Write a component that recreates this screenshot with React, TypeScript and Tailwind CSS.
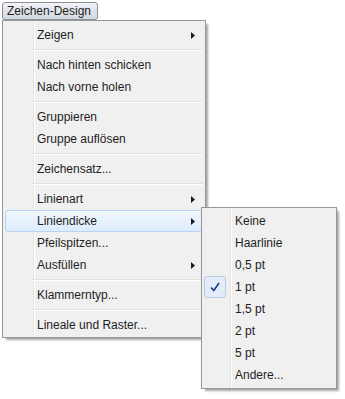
const mainItems: Array<{ label: string; sub?: boolean; active?: boolean } | "sep"> = [
  { label: "Zeigen", sub: true },
  "sep",
  { label: "Nach hinten schicken" },
  { label: "Nach vorne holen" },
  "sep",
  { label: "Gruppieren" },
  { label: "Gruppe auflösen" },
  "sep",
  { label: "Zeichensatz..." },
  "sep",
  { label: "Linienart", sub: true },
  { label: "Liniendicke", sub: true, active: true },
  { label: "Pfeilspitzen..." },
  { label: "Ausfüllen", sub: true },
  "sep",
  { label: "Klammerntyp..." },
  "sep",
  { label: "Lineale und Raster..." },
];

const subItems = ["Keine", "Haarlinie", "0,5 pt", "1 pt", "1,5 pt", "2 pt", "5 pt", "Andere..."];

const Arrow = () => (
  <svg width="4" height="7" viewBox="0 0 4 7" className="shrink-0">
    <path d="M0 0 L4 3.5 L0 7 Z" fill="#1a1a1a" />
  </svg>
);

const App = () => {
  return (
    <div className="relative h-[399px] w-[345px] bg-white font-['Liberation_Sans',sans-serif] text-[12px] text-[#1e1e1e]">
      <div className="pl-[2px] pt-[2px]">
        <div className="flex h-[18px] w-[96px] items-center rounded-[3px] border border-[#8e8f8f] bg-[linear-gradient(to_bottom,#f2f4f7,#dfe3ea_50%,#d3d9e2)] pl-[4px] leading-none">
          Zeichen-Design
        </div>
      </div>

      {/* Main menu */}
      <div className="ml-[2px] w-[204px] border border-[#979797] bg-[#f0f0f0] bg-[linear-gradient(to_right,transparent_30px,#e2e3e3_30px,#e2e3e3_31px,#ffffff_31px,#ffffff_32px,transparent_32px)] px-[2px] pb-[1px] pt-[3px] shadow-[3px_3px_2px_-1px_rgba(0,0,0,0.35)]">
        {mainItems.map((item, i) =>
          item === "sep" ? (
            <div key={i} className="flex h-[8px] flex-col justify-center pl-[28px]">
              <div className="h-px bg-[#e0e0e0]" />
              <div className="h-px bg-white" />
            </div>
          ) : (
            <div
              key={i}
              className={
                item.active
                  ? "flex h-[22px] items-center justify-between rounded-[3px] border border-[#b6d3f2] bg-[linear-gradient(to_bottom,#f1f7fd,#dcebfb)] pl-[31px] pr-[7px]"
                  : "flex h-[22px] items-center justify-between pl-[32px] pr-[8px]"
              }
            >
              <span>{item.label}</span>
              {item.sub && <Arrow />}
            </div>
          )
        )}
      </div>

      {/* Submenu */}
      <div className="absolute left-[201px] top-[207px] w-[136px] border border-[#979797] bg-[#f0f0f0] bg-[linear-gradient(to_right,transparent_28px,#e2e3e3_28px,#e2e3e3_29px,#ffffff_29px,#ffffff_30px,transparent_30px)] px-[2px] py-[2px] shadow-[3px_3px_2px_-1px_rgba(0,0,0,0.35)]">
        {subItems.map((label) => (
          <div key={label} className="flex h-[22px] items-center">
            <div className="flex w-[31px] shrink-0 items-center">
              {label === "1 pt" && (
                <div className="flex h-[22px] w-[22px] items-center justify-center rounded-[3px] border border-[#b6cbe6] bg-[#e3ecf8]">
                  <svg width="10" height="10" viewBox="0 0 10 10">
                    <path d="M1 5.5 L3.8 8.5 L9 1" fill="none" stroke="#173d7a" strokeWidth="1.6" />
                  </svg>
                </div>
              )}
            </div>
            <span>{label}</span>
          </div>
        ))}
      </div>
    </div>
  );
};

export default App;
